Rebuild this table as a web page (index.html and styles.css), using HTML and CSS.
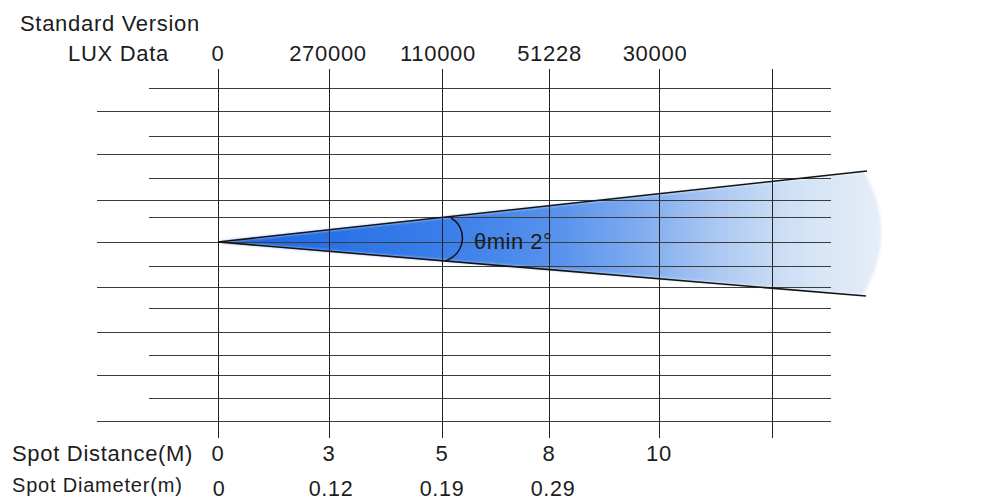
FILE: index.html
```html
<!DOCTYPE html>
<html lang="en">
<head>
<meta charset="utf-8">
<title>Standard Version</title>
<link rel="stylesheet" href="styles.css">
</head>
<body>
<div class="page">
  <div class="title">Standard Version</div>
  <div class="row lux">
    <span class="label">LUX Data</span>
    <span class="num">0</span>
    <span class="num">270000</span>
    <span class="num">110000</span>
    <span class="num">51228</span>
    <span class="num">30000</span>
  </div>
  <svg class="chart" width="1000" height="376" viewBox="0 66 1000 376" xmlns="http://www.w3.org/2000/svg">
    <defs>
      <linearGradient id="beamGrad" gradientUnits="userSpaceOnUse" x1="218" y1="0" x2="882" y2="0">
        <stop offset="0" stop-color="#1a64e4"/>
        <stop offset="0.34" stop-color="#3a7ee9"/>
        <stop offset="0.52" stop-color="#5a93ec"/>
        <stop offset="0.66" stop-color="#88b1f0"/>
        <stop offset="0.76" stop-color="#aecaf2"/>
        <stop offset="0.86" stop-color="#cfe0f5"/>
        <stop offset="0.95" stop-color="#dfe9f6"/>
        <stop offset="1" stop-color="#e4edf8"/>
      </linearGradient>
      <filter id="soft" x="-5%" y="-20%" width="110%" height="140%">
        <feGaussianBlur stdDeviation="1.6"/>
      </filter>
    </defs>
    <path class="beam" d="M218 242 L864 172 Q 899 233 863 295 Z" fill="url(#beamGrad)" filter="url(#soft)"/>
    <g class="hlines">
      <line x1="149" y1="88.5" x2="831" y2="88.5"/>
      <line x1="97" y1="111.5" x2="831" y2="111.5"/>
      <line x1="149" y1="136.5" x2="831" y2="136.5"/>
      <line x1="97" y1="154.5" x2="831" y2="154.5"/>
      <line x1="149" y1="178.5" x2="831" y2="178.5"/>
      <line x1="97" y1="200.5" x2="831" y2="200.5"/>
      <line x1="149" y1="217.5" x2="831" y2="217.5"/>
      <line x1="97" y1="242.5" x2="831" y2="242.5"/>
      <line x1="149" y1="266.5" x2="831" y2="266.5"/>
      <line x1="97" y1="287.5" x2="831" y2="287.5"/>
      <line x1="149" y1="308.5" x2="831" y2="308.5"/>
      <line x1="97" y1="332.5" x2="831" y2="332.5"/>
      <line x1="149" y1="355.5" x2="831" y2="355.5"/>
      <line x1="97" y1="375.5" x2="831" y2="375.5"/>
      <line x1="149" y1="398.5" x2="831" y2="398.5"/>
      <line x1="97" y1="421.5" x2="831" y2="421.5"/>
    </g>
    <g class="vlines">
      <line x1="218.5" y1="69" x2="218.5" y2="438"/>
      <line x1="329.5" y1="69" x2="329.5" y2="438"/>
      <line x1="442.5" y1="69" x2="442.5" y2="438"/>
      <line x1="549.5" y1="69" x2="549.5" y2="438"/>
      <line x1="659.5" y1="69" x2="659.5" y2="438"/>
      <line x1="772.5" y1="69" x2="772.5" y2="438"/>
    </g>
    <g class="edges">
      <line x1="218" y1="242" x2="867" y2="171"/>
      <line x1="218" y1="242" x2="866" y2="296"/>
      <path d="M451 218 C 467 227, 467 252, 446 261"/>
    </g>
    <text class="angle" x="474" y="249">θmin 2°</text>
  </svg>
  <div class="row dist">
    <span class="label">Spot Distance(M)</span>
    <span class="num">0</span>
    <span class="num">3</span>
    <span class="num">5</span>
    <span class="num">8</span>
    <span class="num">10</span>
  </div>
  <div class="row diam">
    <span class="label">Spot Diameter(m)</span>
    <span class="num">0</span>
    <span class="num">0.12</span>
    <span class="num">0.19</span>
    <span class="num">0.29</span>
  </div>
</div>
</body>
</html>
```
FILE: styles.css
```css
html, body {
  margin: 0;
  padding: 0;
  background: #ffffff;
  overflow: hidden;
}

body {
  font-family: "Liberation Sans", Arial, sans-serif;
  color: #1c1c1c;
}

.page {
  width: 1000px;
  height: 500px;
  padding-top: 12px;
  box-sizing: border-box;
}

.title {
  font-size: 22px;
  line-height: 24px;
  letter-spacing: 0.7px;
  padding-left: 20px;
  white-space: nowrap;
}

.row {
  display: grid;
  font-size: 22px;
  line-height: 24px;
  letter-spacing: 0.7px;
  white-space: nowrap;
}

.num {
  text-align: center;
}

.lux {
  margin-top: 6px;
  grid-template-columns: 163px 110px 110px 110px 113px 98px;
}

.lux .label {
  padding-left: 68px;
}

.chart {
  display: block;
}

.hlines line {
  stroke: #3c3c3c;
  stroke-width: 1;
}

.vlines line {
  stroke: #222222;
  stroke-width: 1;
}

.edges line,
.edges path {
  stroke: #141414;
  stroke-width: 1.6;
  fill: none;
}

.angle {
  font-family: "Liberation Sans", Arial, sans-serif;
  font-size: 22px;
  letter-spacing: 0.5px;
  fill: #1c1c1c;
}

.dist {
  grid-template-columns: 163px 110px 112px 114px 100px 120px;
}

.dist .label {
  padding-left: 12px;
}

.diam {
  margin-top: 12px;
  font-size: 21.5px;
  line-height: 22px;
  grid-template-columns: 163px 112px 112px 110px 112px;
}

.diam .label {
  font-size: 20px;
  letter-spacing: 0.8px;
  padding-left: 12px;
  margin-top: -4px;
}
```
